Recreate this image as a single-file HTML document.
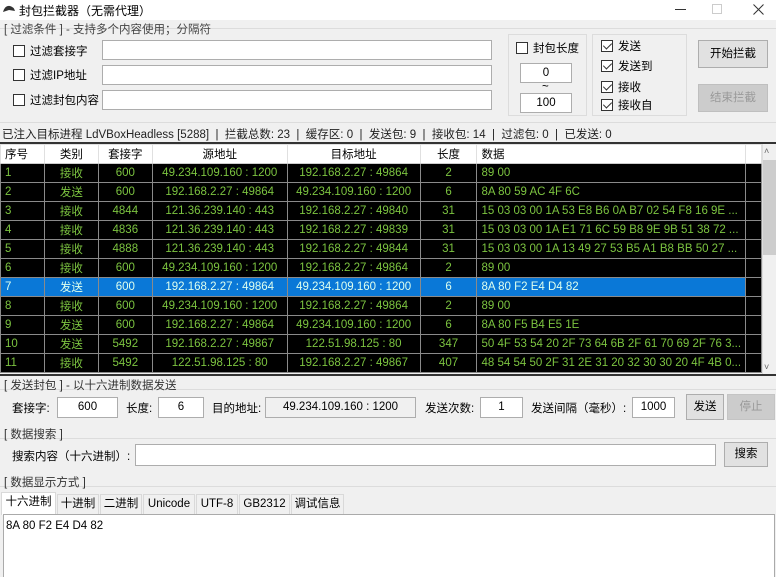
<!DOCTYPE html>
<html><head><meta charset="utf-8"><style>
*{box-sizing:border-box;margin:0;padding:0}
body{width:776px;height:577px;overflow:hidden;background:#f0f0f0;position:relative;font-family:"Liberation Sans","Noto Sans CJK SC",sans-serif;font-size:11.5px;color:#000}
.a{position:absolute;white-space:nowrap}
.inp{position:absolute;background:#fff;border:1px solid #adadad;text-align:center;line-height:18px}
.cb{position:absolute;width:12px;height:12px;border:1px solid #333;background:#fff}
.ck::after{content:"";position:absolute;left:3px;top:0px;width:4px;height:7px;border:solid #333;border-width:0 1.3px 1.3px 0;transform:rotate(45deg)}
.btn{position:absolute;background:#e1e1e1;border:1px solid #adadad;text-align:center}
.grp{position:absolute;border:1px solid #dcdcdc}
table{position:absolute;left:0;top:144px;width:762px;border-collapse:collapse;background:#000;font-size:11.5px}
td{height:19px;border:1px solid #8a8a8a;color:#7cc440;text-align:center;padding:0;overflow:hidden}
td.l{text-align:left;padding-left:4px}
tr.h td{background:#fff;color:#000;border-color:#e0e0e0;border-bottom:1px solid #ccc}
tr.s td{background:#0a78d7;color:#dfe}
.tab{position:absolute;top:494px;height:20px;line-height:19px;text-align:center;border:1px solid #d9d9d9;border-bottom:none;background:#f0f0f0}
</style></head><body>
<div class="a" style="left:0;top:0;width:776px;height:20px;background:#fff"></div>
<svg class="a" style="left:2px;top:4px" width="14" height="10"><path d="M1 8 Q3 1 8 2 Q12 3 13 7 L7 6 Z" fill="#333"/></svg>
<div class="a" style="left:19px;top:2px;font-size:12px">封包拦截器（无需代理）</div>
<div class="a" style="left:675px;top:9px;width:11px;height:1px;background:#333"></div>
<div class="a" style="left:712px;top:4px;width:10px;height:10px;border:1px solid #ccc"></div>
<svg class="a" style="left:753px;top:4px" width="11" height="11"><path d="M0.5 0.5L10.5 10.5M10.5 0.5L0.5 10.5" stroke="#333" stroke-width="1"/></svg>

<div class="a" style="left:4px;top:21px;color:#444">[ 过滤条件 ] - 支持多个内容使用；分隔符</div>
<div class="a" style="left:0;top:28px;width:776px;border-top:1px solid #dcdcdc;z-index:-1"></div>
<div class="cb" style="left:13px;top:45px"></div><div class="a" style="left:30px;top:43px">过滤套接字</div>
<div class="cb" style="left:13px;top:69px"></div><div class="a" style="left:30px;top:67px">过滤IP地址</div>
<div class="cb" style="left:13px;top:94px"></div><div class="a" style="left:30px;top:92px">过滤封包内容</div>
<div class="inp" style="left:102px;top:40px;width:390px;height:20px"></div>
<div class="inp" style="left:102px;top:65px;width:390px;height:20px"></div>
<div class="inp" style="left:102px;top:90px;width:390px;height:20px"></div>

<div class="grp" style="left:508px;top:34px;width:79px;height:82px"></div>
<div class="cb" style="left:516px;top:42px"></div><div class="a" style="left:533px;top:40px">封包长度</div>
<div class="inp" style="left:520px;top:63px;width:52px;height:20px">0</div>
<div class="a" style="left:542px;top:81px">~</div>
<div class="inp" style="left:520px;top:93px;width:52px;height:20px">100</div>

<div class="grp" style="left:592px;top:34px;width:95px;height:82px"></div>
<div class="cb ck" style="left:601px;top:40px"></div><div class="a" style="left:618px;top:38px">发送</div>
<div class="cb ck" style="left:601px;top:60px"></div><div class="a" style="left:618px;top:58px">发送到</div>
<div class="cb ck" style="left:601px;top:81px"></div><div class="a" style="left:618px;top:79px">接收</div>
<div class="cb ck" style="left:601px;top:99px"></div><div class="a" style="left:618px;top:97px">接收自</div>

<div class="btn" style="left:698px;top:40px;width:70px;height:28px;line-height:26px">开始拦截</div>
<div class="btn" style="left:698px;top:84px;width:70px;height:28px;line-height:26px;background:#ccc;border-color:#bfbfbf;color:#999">结束拦截</div>

<div class="a" style="left:0;top:122px;width:776px;border-top:1px solid #dcdcdc"></div>
<div class="a" style="left:2px;top:126px;color:#222">已注入目标进程 LdVBoxHeadless [5288] &nbsp;| &nbsp;拦截总数: 23 &nbsp;| &nbsp;缓存区: 0 &nbsp;| &nbsp;发送包: 9 &nbsp;| &nbsp;接收包: 14 &nbsp;| &nbsp;过滤包: 0 &nbsp;| &nbsp;已发送: 0</div>
<div class="a" style="left:0;top:142px;width:776px;height:2px;background:#333"></div>

<table>
<colgroup><col style="width:44px"><col style="width:54px"><col style="width:54px"><col style="width:135px"><col style="width:133px"><col style="width:57px"><col style="width:269px"><col style="width:16px"></colgroup>
<tr class="h"><td class="l">序号</td><td>类别</td><td>套接字</td><td>源地址</td><td>目标地址</td><td>长度</td><td class="l">数据</td><td></td></tr>
<tr><td class="l">1</td><td>接收</td><td>600</td><td>49.234.109.160 : 1200</td><td>192.168.2.27 : 49864</td><td>2</td><td class="l">89 00</td><td></td></tr>
<tr><td class="l">2</td><td>发送</td><td>600</td><td>192.168.2.27 : 49864</td><td>49.234.109.160 : 1200</td><td>6</td><td class="l">8A 80 59 AC 4F 6C</td><td></td></tr>
<tr><td class="l">3</td><td>接收</td><td>4844</td><td>121.36.239.140 : 443</td><td>192.168.2.27 : 49840</td><td>31</td><td class="l">15 03 03 00 1A 53 E8 B6 0A B7 02 54 F8 16 9E ...</td><td></td></tr>
<tr><td class="l">4</td><td>接收</td><td>4836</td><td>121.36.239.140 : 443</td><td>192.168.2.27 : 49839</td><td>31</td><td class="l">15 03 03 00 1A E1 71 6C 59 B8 9E 9B 51 38 72 ...</td><td></td></tr>
<tr><td class="l">5</td><td>接收</td><td>4888</td><td>121.36.239.140 : 443</td><td>192.168.2.27 : 49844</td><td>31</td><td class="l">15 03 03 00 1A 13 49 27 53 B5 A1 B8 BB 50 27 ...</td><td></td></tr>
<tr><td class="l">6</td><td>接收</td><td>600</td><td>49.234.109.160 : 1200</td><td>192.168.2.27 : 49864</td><td>2</td><td class="l">89 00</td><td></td></tr>
<tr class="s"><td class="l">7</td><td>发送</td><td>600</td><td>192.168.2.27 : 49864</td><td>49.234.109.160 : 1200</td><td>6</td><td class="l">8A 80 F2 E4 D4 82</td><td style="background:#000"></td></tr>
<tr><td class="l">8</td><td>接收</td><td>600</td><td>49.234.109.160 : 1200</td><td>192.168.2.27 : 49864</td><td>2</td><td class="l">89 00</td><td></td></tr>
<tr><td class="l">9</td><td>发送</td><td>600</td><td>192.168.2.27 : 49864</td><td>49.234.109.160 : 1200</td><td>6</td><td class="l">8A 80 F5 B4 E5 1E</td><td></td></tr>
<tr><td class="l">10</td><td>发送</td><td>5492</td><td>192.168.2.27 : 49867</td><td>122.51.98.125 : 80</td><td>347</td><td class="l">50 4F 53 54 20 2F 73 64 6B 2F 61 70 69 2F 76 3...</td><td></td></tr>
<tr><td class="l">11</td><td>接收</td><td>5492</td><td>122.51.98.125 : 80</td><td>192.168.2.27 : 49867</td><td>407</td><td class="l">48 54 54 50 2F 31 2E 31 20 32 30 30 20 4F 4B 0...</td><td></td></tr>
</table>
<div class="a" style="left:762px;top:144px;width:14px;height:231px;background:#f0f0f0;border-left:1px solid #ddd"></div>
<div class="a" style="left:764px;top:146px;font-size:9px;color:#666">˄</div>
<div class="a" style="left:763px;top:160px;width:13px;height:95px;background:#cdcdcd"></div>
<div class="a" style="left:764px;top:362px;font-size:9px;color:#666">˅</div>
<div class="a" style="left:0;top:374px;width:776px;height:2px;background:#333"></div>

<div class="a" style="left:4px;top:377px;color:#333">[ 发送封包 ] - 以十六进制数据发送</div>
<div class="a" style="left:0;top:389px;width:776px;border-top:1px solid #dcdcdc;z-index:-1"></div>
<div class="a" style="left:12px;top:400px">套接字:</div>
<div class="inp" style="left:57px;top:397px;width:61px;height:21px">600</div>
<div class="a" style="left:126px;top:400px">长度:</div>
<div class="inp" style="left:158px;top:397px;width:46px;height:21px">6</div>
<div class="a" style="left:212px;top:400px">目的地址:</div>
<div class="inp" style="left:265px;top:397px;width:151px;height:21px;background:#f0f0f0">49.234.109.160 : 1200</div>
<div class="a" style="left:425px;top:400px">发送次数:</div>
<div class="inp" style="left:480px;top:397px;width:43px;height:21px">1</div>
<div class="a" style="left:531px;top:400px">发送间隔（毫秒）:</div>
<div class="inp" style="left:632px;top:397px;width:43px;height:21px">1000</div>
<div class="btn" style="left:686px;top:394px;width:38px;height:26px;line-height:24px">发送</div>
<div class="btn" style="left:727px;top:394px;width:48px;height:26px;line-height:24px;background:#ccc;border-color:#c4c4c4;color:#999">停止</div>

<div class="a" style="left:4px;top:426px;color:#333">[ 数据搜索 ]</div>
<div class="a" style="left:0;top:438px;width:776px;border-top:1px solid #dcdcdc;z-index:-1"></div>
<div class="a" style="left:12px;top:448px">搜索内容（十六进制）:</div>
<div class="inp" style="left:135px;top:444px;width:581px;height:22px"></div>
<div class="btn" style="left:724px;top:442px;width:44px;height:25px;line-height:23px">搜索</div>

<div class="a" style="left:4px;top:474px;color:#333">[ 数据显示方式 ]</div>
<div class="a" style="left:0;top:486px;width:776px;border-top:1px solid #dcdcdc;z-index:-1"></div>
<div class="tab" style="left:1px;width:55px;background:#fff;top:492px;height:23px">十六进制</div>
<div class="tab" style="left:57px;width:42px">十进制</div>
<div class="tab" style="left:100px;width:42px">二进制</div>
<div class="tab" style="left:143px;width:52px">Unicode</div>
<div class="tab" style="left:196px;width:42px">UTF-8</div>
<div class="tab" style="left:239px;width:51px">GB2312</div>
<div class="tab" style="left:291px;width:53px">调试信息</div>
<div class="a" style="left:3px;top:514px;width:772px;height:63px;background:#fff;border:1px solid #aaa;border-bottom:none"></div>
<div class="a" style="left:6px;top:520px">8A 80 F2 E4 D4 82</div>
</body></html>
